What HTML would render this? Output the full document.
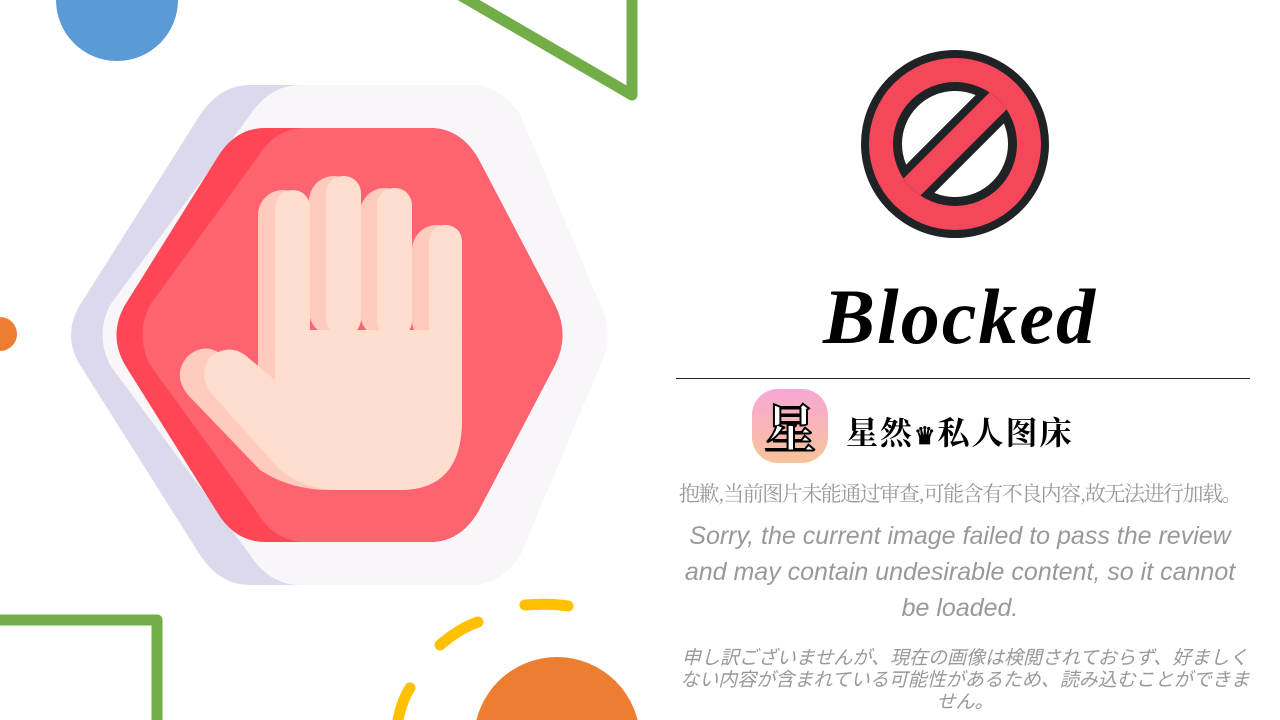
<!DOCTYPE html>
<html><head><meta charset="utf-8"><style>
html,body{margin:0;padding:0;width:1280px;height:720px;overflow:hidden;background:#fff;font-family:"Liberation Sans","Noto Sans CJK SC",sans-serif}
.t{position:absolute;left:660px;width:600px;text-align:center;color:#999}
</style></head><body>
<svg width="1280" height="720" style="position:absolute;left:0;top:0">
<circle cx="117" cy="0" r="61" fill="#5b9bd5"/>
<polyline points="460,-5 632,95 632,-5" fill="none" stroke="#72ad47" stroke-width="11" stroke-linejoin="round" stroke-linecap="round"/>
<circle cx="0" cy="334" r="17" fill="#ed7d31"/>
<polyline points="-5,620 157,620 157,725" fill="none" stroke="#72ad47" stroke-width="11" stroke-linejoin="round"/>
<circle cx="557" cy="740" r="83" fill="#ed7d31"/>
<path d="M398,720 Q402,700 410,688" fill="none" stroke="#ffc000" stroke-width="11" stroke-linecap="round"/>
<path d="M440,645 Q460,628 478,622" fill="none" stroke="#ffc000" stroke-width="11" stroke-linecap="round"/>
<path d="M525,605 Q550,603 568,606" fill="none" stroke="#ffc000" stroke-width="11" stroke-linecap="round"/>
<path d="M250,85 L470,85 Q500,85 520,115 L600,305 Q615,335 600,365 L520,555 Q500,585 470,585 L250,585 Q220,585 200,555 L80,365 Q62,335 80,305 L200,115 Q220,85 250,85Z" fill="#dcd9ec"/>
<path d="M300,85 L470,85 Q500,85 520,115 L600,305 Q615,335 600,365 L520,555 Q500,585 470,585 L300,585 Q270,585 250,555 L110,365 Q95,335 110,305 L250,115 Q270,85 300,85Z" fill="#f8f6f8"/>
<path d="M265,128 L430,128 Q460,128 478,158 L555,305 Q570,335 555,365 L478,512 Q460,542 430,542 L265,542 Q235,542 217,512 L125,365 Q108,335 125,305 L217,158 Q235,128 265,128Z" fill="#fe4656"/>
<path d="M305,128 L430,128 Q460,128 478,158 L555,305 Q570,335 555,365 L478,512 Q460,542 430,542 L305,542 Q275,542 257,512 L150,365 Q135,335 150,305 L257,158 Q275,128 305,128Z" fill="#fe646f"/>
<g fill="#ffcbbe">
<rect x="258" y="190" width="50" height="200" rx="25"/>
<rect x="309" y="176" width="50" height="160" rx="25"/>
<rect x="360" y="188" width="50" height="150" rx="25"/>
<rect x="412" y="225" width="50" height="120" rx="25"/>
<path d="M258,360 L258,390 L225,357 Q205,340 187,357 Q172,375 188,395 L260,470 Q290,490 330,490 L400,490 Q462,490 462,420 L462,330 L258,330Z"/>
</g>
<g fill="#ffddcf">
<rect x="275" y="190" width="35" height="200" rx="17"/>
<rect x="326" y="176" width="35" height="160" rx="17"/>
<rect x="377" y="188" width="35" height="150" rx="17"/>
<rect x="429" y="225" width="33" height="120" rx="16"/>
<path d="M275,330 L275,380 L245,355 Q228,343 210,357 Q198,373 210,392 L280,470 Q305,490 340,490 L400,490 Q462,490 462,420 L462,330Z"/>
</g>
<defs>
<clipPath id="ic"><circle cx="955" cy="144" r="62"/></clipPath>
<linearGradient id="g" x1="0" y1="0" x2="0" y2="1"><stop offset="0" stop-color="#f7a7d4"/><stop offset="1" stop-color="#f8c39c"/></linearGradient>
</defs>
<circle cx="955" cy="144" r="94" fill="#1f2326"/>
<circle cx="955" cy="144" r="86" fill="#f4475a"/>
<circle cx="955" cy="144" r="62" fill="#1f2326"/>
<circle cx="955" cy="144" r="53" fill="#fff"/>
<g clip-path="url(#ic)">
<line x1="1025" y1="74" x2="885" y2="214" stroke="#1f2326" stroke-width="40"/>
<line x1="1025" y1="74" x2="885" y2="214" stroke="#f4475a" stroke-width="24"/>
</g>
<line x1="676" y1="378.5" x2="1250" y2="378.5" stroke="#222" stroke-width="1"/>
<rect x="752" y="389" width="76" height="74" rx="26" fill="url(#g)"/>
</svg>
<div style="position:absolute;left:752px;top:389px;width:76px;height:74px;line-height:74px;text-align:center;font-size:52px;font-weight:bold;color:#fff;-webkit-text-stroke:2px #000;font-family:'Noto Serif CJK SC',serif">星</div>
<div class="t" style="top:272px;font-size:78px;font-weight:bold;font-style:italic;color:#000;font-family:'Liberation Serif',serif;letter-spacing:2px">Blocked</div>
<div style="position:absolute;left:846px;top:408px;font-size:32px;font-weight:bold;color:#000;font-family:'Noto Serif CJK SC',serif;letter-spacing:2px;white-space:nowrap">星然<span style="font-size:24px">♛</span>私人图床</div>
<div class="t" style="top:478px;font-size:21px;font-family:'Noto Serif CJK SC',serif;letter-spacing:-1.5px;white-space:nowrap">抱歉,当前图片未能通过审查,可能含有不良内容,故无法进行加载。</div>
<div class="t" style="top:518px;left:675px;width:570px;font-size:25px;line-height:36px;font-style:italic">Sorry, the current image failed to pass the review and may contain undesirable content, so it cannot be loaded.</div>
<div class="t" style="top:648px;left:680px;width:570px;font-size:19px;line-height:22px;font-style:italic;font-family:'Liberation Sans','Noto Sans CJK JP',sans-serif">申し訳ございませんが、現在の画像は検閲されておらず、好ましくない内容が含まれている可能性があるため、読み込むことができません。</div>
</body></html>
